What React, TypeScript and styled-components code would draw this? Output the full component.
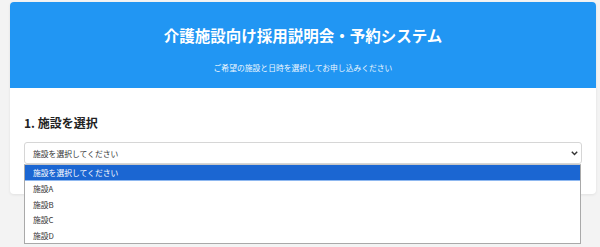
import React from 'react';
import styled, { createGlobalStyle } from 'styled-components';

const GlobalStyle = createGlobalStyle`
  html, body {
    margin: 0;
    padding: 0;
    background: #f3f3f3;
    font-family: 'Noto Sans CJK JP', 'Noto Sans', 'Liberation Sans', sans-serif;
  }
`;

const Page = styled.div`
  padding: 2px 4px 0 10px;
  height: 247px;
  box-sizing: border-box;
`;

const Card = styled.div`
  background: #fff;
  border-radius: 4px;
  box-shadow: 0 1px 3px rgba(0, 0, 0, 0.08);
`;

const Header = styled.header`
  background: #2196f3;
  border-radius: 4px 4px 0 0;
  height: 86px;
  display: flex;
  flex-direction: column;
  align-items: center;
  color: #fff;
  box-sizing: border-box;
  padding-top: 21px;
`;

const Title = styled.h1`
  margin: 0;
  font-size: 15.5px;
  line-height: 24px;
  font-weight: 700;
`;

const Subtitle = styled.p`
  margin: 0;
  margin-top: 16px;
  font-size: 7.8px;
  line-height: 10px;
  opacity: 0.92;
`;

const Body = styled.div`
  padding: 28px 14px 30px 14px;
`;

const SectionTitle = styled.h2`
  margin: 0 0 12px 0;
  font-size: 12px;
  line-height: 14px;
  font-weight: 700;
  color: #222;
`;

const SelectWrap = styled.div`
  position: relative;
`;

const SelectBox = styled.div`
  height: 22px;
  border: 1px solid #d6d6d6;
  border-radius: 3px;
  box-sizing: border-box;
  display: flex;
  align-items: center;
  justify-content: space-between;
  padding: 0 3px 0 8px;
  font-size: 7.8px;
  color: #333;
  background: #fff;
`;

const Menu = styled.ul`
  position: absolute;
  top: 100%;
  left: 0;
  right: 1px;
  margin: 0;
  padding: 0;
  list-style: none;
  background: #fff;
  border: 1px solid #a9a9a9;
  border-top: 1px solid #c8c8c8;
  z-index: 2;
`;

const Option = styled.li<{ $active?: boolean }>`
  height: 15.4px;
  line-height: 15.4px;
  padding-left: 8px;
  font-size: 7.8px;
  color: ${(p) => (p.$active ? '#fff' : '#333')};
  background: ${(p) => (p.$active ? '#1b66d2' : '#fff')};
  border-bottom: ${(p) => (p.$active ? '1px solid #8fb8f0' : 'none')};
`;

const Chevron = () => (
  <svg width="7" height="5" viewBox="0 0 7 5">
    <path d="M0.8 0.8 L3.5 3.6 L6.2 0.8" fill="none" stroke="#333" strokeWidth="1.4" />
  </svg>
);

const options = ['施設を選択してください', '施設A', '施設B', '施設C', '施設D'];

export default function App() {
  return (
    <>
      <GlobalStyle />
      <Page>
        <Card>
          <Header>
            <Title>介護施設向け採用説明会・予約システム</Title>
            <Subtitle>ご希望の施設と日時を選択してお申し込みください</Subtitle>
          </Header>
          <Body>
            <SectionTitle>1. 施設を選択</SectionTitle>
            <SelectWrap>
              <SelectBox>
                <span>施設を選択してください</span>
                <Chevron />
              </SelectBox>
              <Menu>
                {options.map((o, i) => (
                  <Option key={o} $active={i === 0}>
                    {o}
                  </Option>
                ))}
              </Menu>
            </SelectWrap>
          </Body>
        </Card>
      </Page>
    </>
  );
}
